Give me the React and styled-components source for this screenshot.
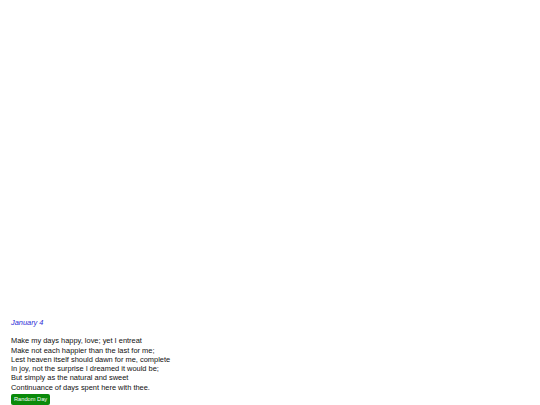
import React, { useState } from 'react';
import styled, { createGlobalStyle } from 'styled-components';

const GlobalStyle = createGlobalStyle`
  html, body {
    margin: 0;
    padding: 0;
    background: #ffffff;
  }
  body {
    font-family: "Liberation Sans", Arial, sans-serif;
  }
`;

const Page = styled.main`
  min-height: 100vh;
  display: flex;
  flex-direction: column;
  justify-content: flex-end;
  padding: 0 11px;
  box-sizing: border-box;
`;

const DayTitle = styled.h2`
  margin: 0 0 9px;
  font-size: 7.4px;
  font-weight: normal;
  font-style: italic;
  color: #2b2bd6;
`;

const Poem = styled.p`
  margin: 0 0 2px;
  font-size: 7.45px;
  line-height: 9.3px;
  color: #111111;
`;

const RandomButton = styled.button`
  align-self: flex-start;
  background: #0a8a0a;
  color: #ffffff;
  border: none;
  border-radius: 2px;
  font-family: "Liberation Sans", Arial, sans-serif;
  font-size: 5.7px;
  padding: 0 3px;
  height: 11px;
  line-height: 11px;
  cursor: pointer;
`;

const lines = [
  'Make my days happy, love; yet I entreat',
  'Make not each happier than the last for me;',
  'Lest heaven itself should dawn for me, complete',
  'In joy, not the surprise I dreamed it would be;',
  'But simply as the natural and sweet',
  'Continuance of days spent here with thee.',
];

const App = () => {
  const [day, setDay] = useState(4);

  return (
    <>
      <GlobalStyle />
      <Page>
        <DayTitle>January {day}</DayTitle>
        <Poem>
          {lines.map((line) => (
            <React.Fragment key={line}>
              {line}
              <br />
            </React.Fragment>
          ))}
        </Poem>
        <RandomButton type="button" onClick={() => setDay(1 + Math.floor(Math.random() * 31))}>
          Random Day
        </RandomButton>
      </Page>
    </>
  );
};

export default App;
